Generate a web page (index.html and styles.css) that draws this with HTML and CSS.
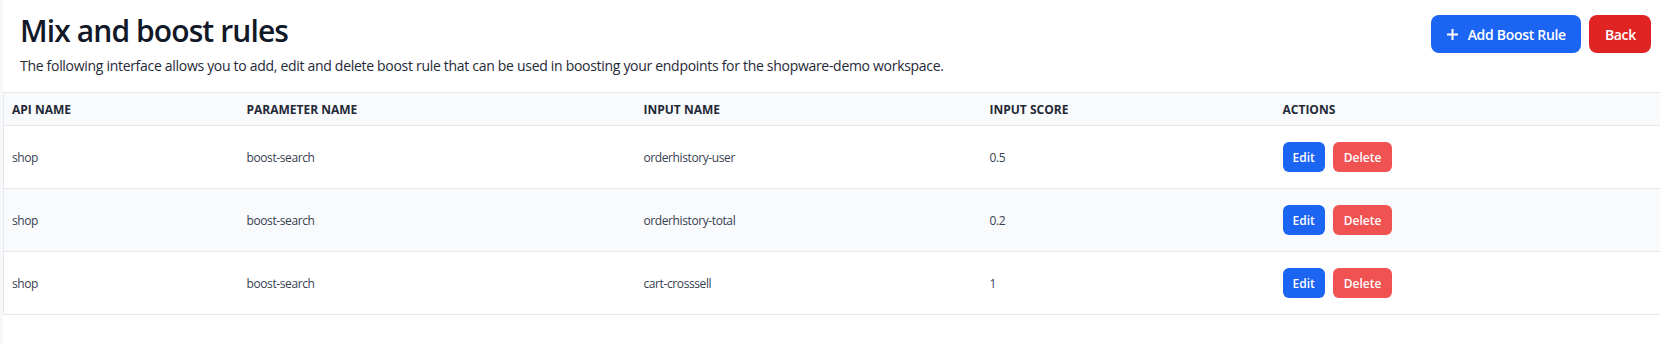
FILE: index.html
```html
<!DOCTYPE html>
<html lang="en">
<head>
    <meta charset="UTF-8">
    <meta name="viewport" content="width=device-width, initial-scale=1.0">
    <title>Mix and boost rules</title>
    <link rel="stylesheet" href="styles.css">
</head>
<body>
    <div class="layout">
        <div class="edge"></div>
        <main class="content">
            <div class="page-head">
                <div class="titles">
                    <h1>Mix and boost rules</h1>
                    <p>The following interface allows you to add, edit and delete boost rule that can be used in boosting your endpoints for the shopware-demo workspace.</p>
                </div>
                <div class="head-actions">
                    <button class="btn btn-blue">
                        <svg width="11" height="11" viewBox="0 0 11 11"><path d="M5.5 0v11M0 5.5h11" stroke="#fff" stroke-width="2"/></svg>
                        Add Boost Rule
                    </button>
                    <button class="btn btn-red">Back</button>
                </div>
            </div>

            <table class="rules">
                <colgroup>
                    <col class="c-api">
                    <col class="c-param">
                    <col class="c-input">
                    <col class="c-score">
                    <col>
                </colgroup>
                <thead>
                    <tr>
                        <th>API Name</th>
                        <th>Parameter Name</th>
                        <th>Input Name</th>
                        <th>Input Score</th>
                        <th>Actions</th>
                    </tr>
                </thead>
                <tbody id="rows"></tbody>
            </table>
        </main>
    </div>

    <script>
        const rules = [
            { api: 'shop', param: 'boost-search', input: 'orderhistory-user', score: '0.5' },
            { api: 'shop', param: 'boost-search', input: 'orderhistory-total', score: '0.2' },
            { api: 'shop', param: 'boost-search', input: 'cart-crosssell', score: '1' }
        ];
        const body = document.getElementById('rows');
        rules.forEach(function (r) {
            body.innerHTML += `<tr>
                <td>${r.api}</td>
                <td>${r.param}</td>
                <td>${r.input}</td>
                <td>${r.score}</td>
                <td><div class="row-actions"><button class="sm sm-blue">Edit</button><button class="sm sm-red">Delete</button></div></td>
            </tr>`;
        });
    </script>
</body>
</html>
```

FILE: styles.css
```css
html, body {
    margin: 0;
    background: #fff;
}
body {
    font-family: "Open Sans", "Noto Sans", sans-serif;
    color: #111827;
}
.layout {
    display: flex;
    min-height: 344px;
}
.edge {
    width: 3px;
    background: #f7f8fa;
    flex-shrink: 0;
}
.content {
    flex: 1;
    min-width: 0;
}
.page-head {
    display: flex;
    justify-content: space-between;
    align-items: flex-start;
    padding: 13px 9px 0 17px;
}
.titles h1 {
    margin: 0;
    font-size: 30px;
    line-height: 36px;
    font-weight: 600;
    letter-spacing: -0.9px;
    color: #111827;
}
.titles p {
    margin: 7px 0 0;
    font-size: 14px;
    line-height: 20px;
    letter-spacing: -0.3px;
    color: #1f2937;
}
.head-actions {
    display: flex;
    gap: 8px;
    margin-top: 2px;
}
.btn {
    display: flex;
    align-items: center;
    gap: 10px;
    height: 38px;
    padding: 0 15px 0 16px;
    border: none;
    border-radius: 8px;
    color: #fff;
    font-family: inherit;
    font-size: 14px;
    font-weight: 600;
    letter-spacing: -0.3px;
    cursor: pointer;
}
.btn-blue {
    background: #1c64f2;
}
.btn-red {
    background: #e02424;
}
.rules {
    margin-top: 16px;
    width: 100%;
    border-collapse: collapse;
    border: 1px solid #e5e7eb;
    border-right: none;
    table-layout: fixed;
    font-size: 12px;
}
.c-api { width: 235px; }
.c-param { width: 397px; }
.c-input { width: 346px; }
.c-score { width: 293px; }
.rules th {
    background: #f9fafb;
    text-align: left;
    text-transform: uppercase;
    font-weight: 700;
    color: #1f2937;
    height: 32px;
    padding: 0 8px;
    border-bottom: 1px solid #e5e7eb;
}
.rules td {
    height: 62px;
    padding: 0 8px;
    color: #374151;
    letter-spacing: -0.4px;
    border-bottom: 1px solid #e5e7eb;
}
.rules tbody tr:nth-child(even) td {
    background: #f9fafb;
}
.row-actions {
    display: flex;
    gap: 8px;
}
.sm {
    height: 30px;
    border: none;
    border-radius: 6px;
    color: #fff;
    font-family: inherit;
    font-size: 12px;
    font-weight: 600;
    letter-spacing: 0;
    padding: 0 10px;
    cursor: pointer;
}
.sm-blue {
    background: #1c64f2;
}
.sm-red {
    background: #f05252;
    padding: 0 11px;
}
```
